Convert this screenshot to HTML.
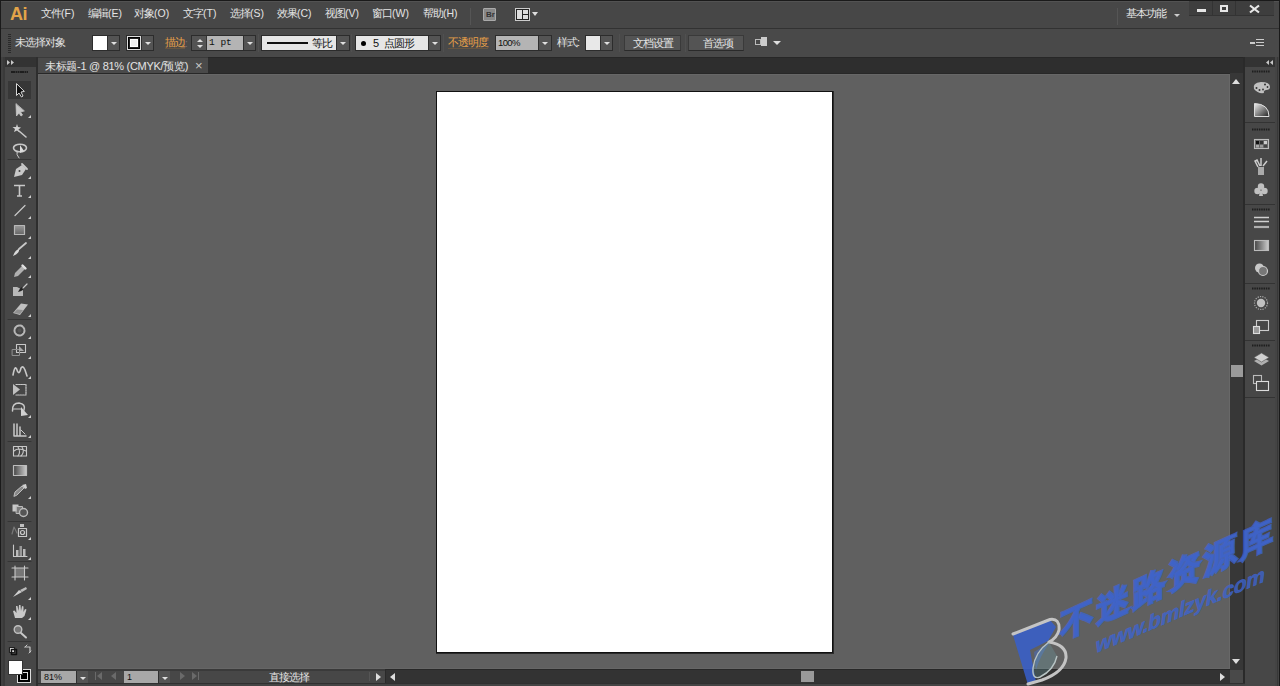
<!DOCTYPE html>
<html><head><meta charset="utf-8">
<style>
*{margin:0;padding:0;box-sizing:border-box}
html,body{width:1280px;height:686px;overflow:hidden;background:#1a1a1a;font-family:"Liberation Sans",sans-serif;}
.a{position:absolute}
.menu{top:7px;font-size:11px;color:#e4e4e4;white-space:nowrap;line-height:13px;letter-spacing:-1px}
.l{font-size:10.5px;letter-spacing:0}
.t{font-size:11px;color:#e4e4e4;white-space:nowrap;line-height:13px;letter-spacing:-1px}
.dd{background:#545454;border-left:1px solid #2f2f2f}
.dd:after{content:"";position:absolute;left:3px;top:6px;border-left:3px solid transparent;border-right:3px solid transparent;border-top:3px solid #e0e0e0}
.grp{border:1px solid #2c2c2c}
.sep{width:1px;background:#383838;border-right:1px solid #505050}
svg{position:absolute;overflow:visible}
</style></head><body>
<!-- window frame -->
<div class="a" style="left:1px;top:1px;width:1278px;height:685px;background:#454545"></div>
<!-- menubar -->
<div class="a" style="left:1px;top:1px;width:1278px;height:27px;background:#474747;border-top:1px solid #525252"></div>
<div class="a" style="left:1px;top:28px;width:1278px;height:1px;background:#323232"></div>
<!-- control bar -->
<div class="a" style="left:1px;top:29px;width:1278px;height:28px;background:#494949"></div>
<!-- left toolbar -->
<div class="a" style="left:1px;top:57px;width:3px;height:629px;background:#404040"></div>
<div class="a" style="left:3px;top:57px;width:2px;height:629px;background:#3a3a3a"></div>
<div class="a" style="left:5px;top:57px;width:31px;height:629px;background:#474747"></div>
<div class="a" style="left:5px;top:57px;width:31px;height:10px;background:#333"></div>
<div class="a" style="left:36px;top:57px;width:2px;height:629px;background:#2e2e2e"></div>
<!-- tab bar -->
<div class="a" style="left:38px;top:57px;width:1207px;height:17px;background:#2e2e2e;border-top:1px solid #272727"></div>
<div class="a" style="left:38px;top:57px;width:170px;height:16px;background:#4a4a4a;border-top:1px solid #3a3a3a"></div>
<div class="a" style="left:38px;top:73px;width:1192px;height:1px;background:#282828"></div>
<!-- canvas -->
<div class="a" style="left:38px;top:74px;width:1192px;height:595px;background:#606060;border-top:1px solid #676767;border-left:1px solid #656565;border-right:1px solid #686868;border-bottom:1px solid #666"></div>
<!-- vscroll -->
<div class="a" style="left:1230px;top:73px;width:13px;height:597px;background:#373737"></div>
<div class="a" style="left:1243px;top:57px;width:2px;height:629px;background:#2a2a2a"></div>
<!-- right dock -->
<div class="a" style="left:1245px;top:57px;width:30px;height:629px;background:#474747"></div>
<div class="a" style="left:1245px;top:57px;width:30px;height:10px;background:#333"></div>
<div class="a" style="left:1275px;top:57px;width:4px;height:629px;background:#444"></div>
<div class="a" style="left:1277px;top:57px;width:1px;height:629px;background:#383838"></div>
<div class="a" style="left:1279px;top:0px;width:1px;height:686px;background:#1a1a1a"></div>
<!-- status bar -->
<div class="a" style="left:38px;top:669px;width:1192px;height:17px;background:#474747;border-top:2px solid #3a3a3a"></div>
<div class="a" style="left:385px;top:669px;width:845px;height:14px;background:#333;border-top:1px solid #282828;border-left:1px solid #2a2a2a"></div>
<div class="a" style="left:1230px;top:670px;width:13px;height:13px;background:#494949"></div>
<div class="a" style="left:38px;top:683px;width:1207px;height:1px;background:#303030"></div>
<div class="a" style="left:38px;top:684px;width:1207px;height:2px;background:#444"></div>
<div class="a" style="left:369px;top:672px;width:1px;height:9px;background:#3a3a3a;border-right:1px solid #555"></div>

<!-- artboard -->
<div class="a" style="left:436px;top:91px;width:398px;height:563px;background:#2b2b2b"></div>
<div class="a" style="left:436px;top:91px;width:397px;height:562px;background:#fff;border:1px solid #111"></div>

<!-- menu -->
<div class="a" style="left:10px;top:5px;font-size:18px;font-weight:bold;color:#e3a449;line-height:18px;letter-spacing:-0.5px">Ai</div>
<div class="a menu" style="left:41px">文件<span class="l">(F)</span></div>
<div class="a menu" style="left:88px">编辑<span class="l">(E)</span></div>
<div class="a menu" style="left:134px">对象<span class="l">(O)</span></div>
<div class="a menu" style="left:183px">文字<span class="l">(T)</span></div>
<div class="a menu" style="left:230px">选择<span class="l">(S)</span></div>
<div class="a menu" style="left:277px">效果<span class="l">(C)</span></div>
<div class="a menu" style="left:325px">视图<span class="l">(V)</span></div>
<div class="a menu" style="left:372px">窗口<span class="l">(W)</span></div>
<div class="a menu" style="left:423px">帮助<span class="l">(H)</span></div>
<div class="a" style="left:470px;top:8px;width:1px;height:17px;background:#333;border-right:1px solid #555"></div>

<!-- Br icon -->
<div class="a" style="left:483px;top:8px;width:13px;height:13px;background:#888;border:1px solid #aaa;border-radius:1px"></div>
<div class="a" style="left:486px;top:10px;font-size:8px;color:#333;font-weight:bold;line-height:9px">Br</div>
<!-- layout icon -->
<div class="a" style="left:515px;top:8px;width:15px;height:13px;border:1px solid #ccc;background:#222"></div>
<div class="a" style="left:517px;top:10px;width:5px;height:9px;background:#ddd"></div>
<div class="a" style="left:523px;top:10px;width:5px;height:4px;background:#ddd"></div>
<div class="a" style="left:523px;top:15px;width:5px;height:4px;background:#ddd"></div>
<div class="a" style="left:532px;top:12px;border-left:3px solid transparent;border-right:3px solid transparent;border-top:4px solid #ddd"></div>

<!-- workspace -->
<div class="a" style="left:1117px;top:8px;width:1px;height:17px;background:#333;border-right:1px solid #555"></div>
<div class="a menu" style="left:1126px;top:7px">基本功能</div>
<div class="a" style="left:1174px;top:14px;border-left:3px solid transparent;border-right:3px solid transparent;border-top:3px solid #ccc"></div>
<!-- window buttons -->
<div class="a" style="left:1189px;top:1px;width:85px;height:15px;background:#3e3e3e;border-bottom:1px solid #333"></div>
<div class="a" style="left:1212px;top:1px;width:1px;height:15px;background:#333"></div>
<div class="a" style="left:1235px;top:1px;width:1px;height:15px;background:#333"></div>
<div class="a" style="left:1197px;top:9px;width:9px;height:3px;background:#e6e6e6"></div>
<div class="a" style="left:1220px;top:5px;width:8px;height:7px;border:2px solid #e6e6e6"></div>
<svg style="left:1249px;top:5px" width="11" height="8"><path d="M1 0.5 L10 7.5 M10 0.5 L1 7.5" stroke="#e8e8e8" stroke-width="2.2"/></svg>

<!-- control bar contents -->
<div class="a" style="left:8px;top:34px;width:3px;height:19px;background:repeating-linear-gradient(#2a2a2a 0 1px,transparent 1px 2px)"></div>
<div class="a t" style="left:15px;top:36px">未选择对象</div>

<div class="a grp" style="left:92px;top:35px;width:28px;height:16px;background:#545454"></div>
<div class="a" style="left:93px;top:36px;width:14px;height:14px;background:#fff"></div>
<div class="a dd" style="left:107px;top:36px;width:12px;height:14px"></div>

<div class="a grp" style="left:126px;top:35px;width:28px;height:16px;background:#545454"></div>
<div class="a" style="left:127px;top:36px;width:14px;height:14px;background:#000;border:1px solid #ddd"></div>
<div class="a" style="left:130px;top:39px;width:8px;height:8px;background:#eee;border:1px solid #fff;outline:1px solid #222"></div>
<div class="a dd" style="left:141px;top:36px;width:12px;height:14px"></div>

<div class="a t" style="left:165px;top:36px;color:#e8a048;border-bottom:1px solid rgba(160,110,50,0.35);line-height:12px">描边</div>
<div class="a" style="left:185px;top:38px;font-size:10px;color:#777">:</div>
<div class="a grp" style="left:191px;top:35px;width:65px;height:16px;background:#545454"></div>
<div class="a" style="left:197px;top:39px;border-left:3px solid transparent;border-right:3px solid transparent;border-bottom:3px solid #ddd"></div>
<div class="a" style="left:197px;top:45px;border-left:3px solid transparent;border-right:3px solid transparent;border-top:3px solid #ddd"></div>
<div class="a" style="left:206px;top:36px;width:37px;height:14px;background:#b4b4b4;border-left:1px solid #333"></div>
<div class="a" style="left:209px;top:37px;font-family:'Liberation Mono',monospace;font-size:9.5px;color:#111;line-height:12px;letter-spacing:0px">1 pt</div>
<div class="a dd" style="left:243px;top:36px;width:12px;height:14px"></div>
<div class="a sep" style="left:258px;top:34px;height:18px"></div>

<div class="a grp" style="left:261px;top:35px;width:89px;height:16px;background:#545454"></div>
<div class="a" style="left:262px;top:36px;width:74px;height:14px;background:#e6e6e6"></div>
<div class="a" style="left:267px;top:42px;width:41px;height:2px;background:#111"></div>
<div class="a t" style="left:312px;top:37px;color:#111">等比</div>
<div class="a dd" style="left:336px;top:36px;width:13px;height:14px"></div>
<div class="a sep" style="left:351px;top:34px;height:18px"></div>

<div class="a grp" style="left:355px;top:35px;width:86px;height:16px;background:#545454"></div>
<div class="a" style="left:356px;top:36px;width:72px;height:14px;background:#e6e6e6"></div>
<div class="a" style="left:361px;top:41px;width:5px;height:5px;border-radius:50%;background:#000"></div>
<div class="a" style="left:373px;top:37px;font-size:11px;color:#111;line-height:12px">5</div>
<div class="a t" style="left:384px;top:37px;color:#111">点圆形</div>
<div class="a dd" style="left:428px;top:36px;width:12px;height:14px"></div>
<div class="a sep" style="left:443px;top:34px;height:18px"></div>

<div class="a t" style="left:448px;top:36px;color:#e8a048;border-bottom:1px solid rgba(160,110,50,0.35);line-height:12px">不透明度</div>
<div class="a grp" style="left:495px;top:35px;width:57px;height:16px;background:#545454"></div>
<div class="a" style="left:496px;top:36px;width:42px;height:14px;background:#b4b4b4"></div>
<div class="a" style="left:498px;top:37px;font-size:9.5px;color:#111;line-height:12px;letter-spacing:-0.6px">100%</div>
<div class="a dd" style="left:538px;top:36px;width:13px;height:14px"></div>
<div class="a t" style="left:557px;top:36px">样式:</div>
<div class="a grp" style="left:585px;top:35px;width:28px;height:16px;background:#545454"></div>
<div class="a" style="left:586px;top:36px;width:14px;height:14px;background:#e8e8e8"></div>
<div class="a dd" style="left:600px;top:36px;width:12px;height:14px"></div>
<div class="a sep" style="left:619px;top:34px;height:18px"></div>

<div class="a" style="left:624px;top:35px;width:57px;height:16px;background:#545454;border:1px solid #3a3a3a;border-bottom-color:#2a2a2a"></div>
<div class="a t" style="left:633px;top:37px">文档设置</div>
<div class="a sep" style="left:685px;top:34px;height:18px"></div>
<div class="a" style="left:688px;top:35px;width:56px;height:16px;background:#545454;border:1px solid #3a3a3a;border-bottom-color:#2a2a2a"></div>
<div class="a t" style="left:703px;top:37px">首选项</div>
<div class="a" style="left:755px;top:39px;width:6px;height:6px;border:1px solid #bbb"></div>
<div class="a" style="left:761px;top:37px;width:6px;height:9px;background:#ccc"></div>
<div class="a" style="left:773px;top:41px;border-left:4px solid transparent;border-right:4px solid transparent;border-top:4px solid #ddd"></div>

<!-- right menu icon -->
<div class="a" style="left:1250px;top:42px;border-top:2px solid transparent;border-bottom:2px solid transparent;border-right:0;border-left:0"></div>
<div class="a" style="left:1250px;top:42px;width:5px;height:2px;background:#ccc"></div>
<div class="a" style="left:1256px;top:39px;width:8px;height:1px;background:#ccc"></div>
<div class="a" style="left:1256px;top:42px;width:8px;height:1px;background:#ccc"></div>
<div class="a" style="left:1256px;top:45px;width:8px;height:1px;background:#ccc"></div>

<!-- tab text -->
<div class="a t" style="left:45px;top:60px;font-size:11px;letter-spacing:-0.3px">未标题-1 @ 81% (CMYK/预览)</div>
<div class="a" style="left:195px;top:59px;font-size:13px;color:#c8c8c8;line-height:13px">×</div>

<!-- toolbar header -->
<svg class="a" style="left:7px;top:60px" width="8" height="5"><path d="M0 0 L3 2.5 L0 5 Z M4 0 L7 2.5 L4 5 Z" fill="#c8c8c8"/></svg>
<div class="a" style="left:11px;top:71px;width:17px;height:2px;background:repeating-linear-gradient(90deg,#1e1e1e 0 1.5px,#333 1.5px 2.3px)"></div>
<!-- right dock header -->
<svg class="a" style="left:1266px;top:60px" width="8" height="5"><path d="M3 0 L0 2.5 L3 5 Z M7 0 L4 2.5 L7 5 Z" fill="#c8c8c8"/></svg>

<!-- status bar -->
<div class="a" style="left:41px;top:671px;width:35px;height:12px;background:#a8a8a8"></div>
<div class="a" style="left:44px;top:671px;font-size:9px;color:#111;line-height:12px">81%</div>
<div class="a dd" style="left:76px;top:671px;width:12px;height:12px"></div>
<div class="a" style="left:124px;top:671px;width:34px;height:12px;background:#a8a8a8"></div>
<div class="a" style="left:127px;top:671px;font-size:9px;color:#111;line-height:12px">1</div>
<div class="a dd" style="left:158px;top:671px;width:12px;height:12px"></div>
<div class="a t" style="left:269px;top:671px;">直接选择</div>
<div class="a" style="left:376px;top:673px;border-top:4px solid transparent;border-bottom:4px solid transparent;border-left:5px solid #ddd"></div>
<div class="a" style="left:390px;top:673px;border-top:4px solid transparent;border-bottom:4px solid transparent;border-right:5px solid #ddd"></div>
<div class="a" style="left:1220px;top:673px;border-top:4px solid transparent;border-bottom:4px solid transparent;border-left:5px solid #ddd"></div>
<div class="a" style="left:801px;top:671px;width:13px;height:11px;background:#9a9a9a"></div>
<!-- nav arrows -->
<div class="a" style="left:95px;top:672px;width:1px;height:8px;background:#6a6a6a"></div>
<div class="a" style="left:97px;top:672px;border-top:4px solid transparent;border-bottom:4px solid transparent;border-right:5px solid #6a6a6a"></div>
<div class="a" style="left:111px;top:672px;border-top:4px solid transparent;border-bottom:4px solid transparent;border-right:5px solid #6a6a6a"></div>
<div class="a" style="left:180px;top:672px;border-top:4px solid transparent;border-bottom:4px solid transparent;border-left:5px solid #6a6a6a"></div>
<div class="a" style="left:192px;top:672px;border-top:4px solid transparent;border-bottom:4px solid transparent;border-left:5px solid #6a6a6a"></div>
<div class="a" style="left:198px;top:672px;width:1px;height:8px;background:#6a6a6a"></div>
<!-- vscroll arrows & thumb -->
<div class="a" style="left:1232px;top:79px;border-left:4.5px solid transparent;border-right:4.5px solid transparent;border-bottom:5px solid #ddd"></div>
<div class="a" style="left:1232px;top:659px;border-left:4.5px solid transparent;border-right:4.5px solid transparent;border-top:5px solid #ddd"></div>
<div class="a" style="left:1231px;top:365px;width:12px;height:12px;background:#9a9a9a"></div>

<!-- fill/stroke -->
<div class="a" style="left:17px;top:669px;width:14px;height:14px;background:#000;border:1px solid #ddd"></div>
<div class="a" style="left:20px;top:672px;width:8px;height:8px;border:1px solid #ddd;background:#000"></div>
<div class="a" style="left:8px;top:660px;width:15px;height:15px;background:#fff;border:1px solid #333"></div>
<svg class="a" style="left:0;top:0" width="1280" height="686" viewBox="0 0 1280 686">
<defs>
<linearGradient id="gr1" x1="0" y1="0" x2="1" y2="0"><stop offset="0" stop-color="#444"/><stop offset="1" stop-color="#ccc"/></linearGradient>
<linearGradient id="gr2" x1="0" y1="0" x2="1" y2="1"><stop offset="0" stop-color="#eee"/><stop offset="1" stop-color="#222"/></linearGradient>
<linearGradient id="gr3" x1="0" y1="0" x2="0" y2="1"><stop offset="0" stop-color="#999"/><stop offset="1" stop-color="#666"/></linearGradient>
</defs>
<g fill="none" stroke="#c8c8c8" stroke-width="1.2" stroke-linejoin="round" stroke-linecap="round">
<g><path d="M8 159.5 L31 159.5" stroke="#353535" stroke-width="1"/><path d="M8 319.5 L31 319.5" stroke="#353535" stroke-width="1"/><path d="M8 441.5 L31 441.5" stroke="#353535" stroke-width="1"/><path d="M8 521.5 L31 521.5" stroke="#353535" stroke-width="1"/><path d="M8 561.5 L31 561.5" stroke="#353535" stroke-width="1"/><path d="M8 641.5 L31 641.5" stroke="#353535" stroke-width="1"/></g>
<!-- selected highlight -->
<rect x="8" y="81" width="23" height="18" fill="#373737" stroke="none"/>
<!-- 1 selection -->
<path d="M16.5 84 L16.5 95.5 L19 93 L21.5 97 L23 96 L21 92 L24 91.5 Z" fill="#111" stroke="#d8d8d8" stroke-width="1"/>
<!-- 2 direct selection -->
<path d="M16 104 L16.5 116 L19 113 L21 116 L22.5 115 L20.5 112 L24 111 Z" fill="#c8c8c8" stroke="#c8c8c8" stroke-width="0.8"/>
<!-- 3 magic wand -->
<path d="M17 124 L18 127 L21 127.5 L18.5 129.5 L19.5 132.5 L17 130.5 L14 132 L15 129 L12.5 127 L16 127 Z" fill="#d0d0d0" stroke="none"/>
<path d="M19 131 L26 137" stroke-width="1.6"/>
<!-- 4 lasso -->
<ellipse cx="20" cy="148" rx="6.5" ry="3.8" stroke-width="1.6"/>
<path d="M20 145 L20 153 L24 151 Z" fill="#ddd" stroke="none"/>
<path d="M17 151 Q16 155 19 158" stroke-width="1"/>
<!-- 5 pen -->
<path d="M14 177 L16 169 L22 165 L26 169 L22 175 Z" fill="#c8c8c8" stroke="none"/>
<path d="M22 164 L27 169" stroke-width="1.8"/>
<circle cx="19.5" cy="171" r="1" fill="#444" stroke="none"/>
<!-- 6 type -->
<path d="M14 185.5 L25 185.5 M19.5 185.5 L19.5 196 M17 196 L22 196" stroke-width="1.6" stroke-linecap="butt"/>
<!-- 7 line -->
<path d="M15 215.5 L25 205.5" stroke-width="1.2"/>
<!-- 8 rect -->
<rect x="14.5" y="225.5" width="10" height="9" fill="url(#gr3)" stroke="#b8b8b8"/>
<!-- 9 brush -->
<path d="M19 249 L26 243" stroke-width="1.8"/>
<path d="M13 256 Q15 250 19 249 Q20 253 13 256 Z" fill="#d8d8d8" stroke="none"/>
<!-- 10 pencil -->
<path d="M14 277 L15 273 L23 265 L26 268 L18 276 Z" fill="#b0b0b0" stroke="none"/>
<path d="M22.5 265.5 L25.5 268.5" stroke="#e0e0e0" stroke-width="2.4"/>
<!-- 11 blob -->
<path d="M13 287 L13 296 L23 296 L23 290 L17 287 Z" fill="#b8b8b8" stroke="none"/>
<path d="M18 292 Q21 286 24 287 Q24 291 18 292 Z" fill="#222" stroke="none"/>
<path d="M23 288 L27 284" stroke-width="1.2"/>
<!-- 12 eraser -->
<path d="M13 313 L21 303.5 L28 304.5 L20 315 Z" fill="#c0c0c0" stroke="none"/>
<path d="M14 313 L17 309.5 L23 310 L20 314 Z" fill="#909090" stroke="none"/>
<!-- 13 rotate -->
<circle cx="19.5" cy="330.5" r="5" stroke-width="2" stroke-dasharray="2.2 1.2" stroke="#b8b8b8"/><circle cx="19.5" cy="330.5" r="2" fill="#555" stroke="none"/>
<!-- 14 scale -->
<rect x="16.5" y="344.5" width="9" height="8" stroke-width="1.1"/>
<rect x="12.5" y="349.5" width="7" height="6" stroke="#909090" stroke-width="1"/>
<path d="M19 346 L24 351 L19 351 Z" fill="#aaa" stroke="none"/>
<!-- 15 width -->
<path d="M13 375 Q15 364 17 370 Q19 376 21 368 Q23 365 25 370 L27 376" stroke-width="1.6"/>
<!-- 16 free transform -->
<path d="M13 384 L13 395 L20 389.5 Z" fill="#c0c0c0" stroke="none"/>
<path d="M16 384.5 L26 384.5 L26 395 L16 395" stroke-width="1.2" stroke-dasharray="1.5 1"/>
<!-- 17 shape builder -->
<path d="M12.5 411 Q12 403 19 403 Q26 404 24 410" stroke-width="1.5"/>
<path d="M13 409 L21 409" stroke-width="1.2"/>
<path d="M21 407 L21 416 L28 415 Z" fill="#d0d0d0" stroke="none"/>
<!-- 18 perspective grid -->
<path d="M14 424 L14 436 L26 436 M17 424 L17 436 M20 427 L20 436" stroke-width="1.5"/>
<path d="M21 430 L25 434" stroke-width="1"/>
<!-- 19 mesh -->
<rect x="13.5" y="446.5" width="13" height="9.5" stroke-width="1.1"/>
<path d="M14 451 Q18 447 26 451 M18 447 Q21 452 18 456 M22 447 Q25 452 21 456" stroke-width="1.1"/>
<!-- 20 gradient -->
<rect x="13.5" y="465.5" width="13" height="10" fill="url(#gr1)" stroke="#bdbdbd"/>
<!-- 21 eyedropper -->
<path d="M14 496 L15 492 L22 486 L24 488 L17 495 Z" fill="#888" stroke="#c8c8c8" stroke-width="0.9"/>
<path d="M22 485 L26 484 L27 488 L25 489 Z" fill="#d0d0d0" stroke="none"/>
<!-- 22 blend -->
<rect x="12.5" y="504.5" width="6" height="7" fill="#c8c8c8" stroke="none"/>
<rect x="16.5" y="506.5" width="6" height="7" fill="#7a7a7a" stroke="#bbb" stroke-width="1"/>
<circle cx="23.5" cy="512.5" r="4" fill="#555" stroke="#bbb" stroke-width="1.4"/>
<!-- 23 symbol sprayer -->
<rect x="18.5" y="528.5" width="8" height="8" stroke-width="1.2"/>
<circle cx="22.5" cy="532.5" r="2" stroke-width="1.2"/>
<path d="M12 534 L14 527 L17 533" stroke="#777" stroke-width="1.2"/>
<rect x="20" y="524" width="4" height="3" fill="#c0c0c0" stroke="none"/>
<!-- 24 column graph -->
<path d="M13.5 545 L13.5 556.5 L27 556.5" stroke-width="1.1"/>
<rect x="16" y="550" width="2.5" height="6" fill="#bbb" stroke="none"/>
<rect x="19.5" y="546" width="2.5" height="10" fill="#999" stroke="none"/>
<rect x="23" y="549" width="2.5" height="7" fill="#bbb" stroke="none"/>
<!-- 25 artboard -->
<rect x="15" y="568" width="9.5" height="9" fill="#777" stroke="none"/>
<path d="M15 566 L15 580 M24.5 566 L24.5 580 M12 568 L28 568 M12 577 L28 577" stroke-width="1.1"/>
<!-- 26 slice -->
<path d="M13 597 L19 590 L22 592 Z" fill="#d0d0d0" stroke="none"/>
<path d="M20 590 L26 587 L27 589 L22 592 Z" fill="#bbb" stroke="none"/>
<!-- 27 hand -->
<path d="M15 618 L13 611 L14.5 610.5 L16.5 613 L16 606 L17.5 606 L18.5 611 L19 605 L20.5 605 L21 611 L22 606 L23.5 606.5 L23.5 612 L25 609 L26.5 609.5 L24.5 616 L22 618 Z" fill="#c8c8c8" stroke="none"/>
<!-- 28 zoom -->
<circle cx="18" cy="629.5" r="3.8" fill="#777" stroke="#c0c0c0" stroke-width="1.4"/>
<path d="M21 633 L26 637.5" stroke-width="2"/>
<!-- flyout dots -->
<g fill="#d0d0d0" stroke="none">
<path d="M31.0 115.0 L31.0 118.0 L28.0 118.0 Z"/><path d="M31.0 176.0 L31.0 179.0 L28.0 179.0 Z"/><path d="M31.0 195.0 L31.0 198.0 L28.0 198.0 Z"/>
<path d="M31.0 216.0 L31.0 219.0 L28.0 219.0 Z"/><path d="M31.0 236.0 L31.0 239.0 L28.0 239.0 Z"/><path d="M31.0 256.0 L31.0 259.0 L28.0 259.0 Z"/>
<path d="M31.0 275.0 L31.0 278.0 L28.0 278.0 Z"/><path d="M31.0 314.0 L31.0 317.0 L28.0 317.0 Z"/><path d="M31.0 336.0 L31.0 339.0 L28.0 339.0 Z"/>
<path d="M31.0 356.0 L31.0 359.0 L28.0 359.0 Z"/><path d="M31.0 376.0 L31.0 379.0 L28.0 379.0 Z"/><path d="M31.0 415.0 L31.0 418.0 L28.0 418.0 Z"/>
<path d="M31.0 435.0 L31.0 438.0 L28.0 438.0 Z"/><path d="M31.0 496.0 L31.0 499.0 L28.0 499.0 Z"/><path d="M31.0 537.0 L31.0 540.0 L28.0 540.0 Z"/>
<path d="M31.0 557.0 L31.0 560.0 L28.0 560.0 Z"/><path d="M31.0 597.0 L31.0 600.0 L28.0 600.0 Z"/><path d="M31.0 617.0 L31.0 620.0 L28.0 620.0 Z"/>
</g>
<!-- small default fill/stroke & swap -->
<rect x="9.5" y="647.5" width="5" height="5" fill="#eee" stroke="#222"/>
<rect x="11.5" y="649.5" width="5" height="5" fill="none" stroke="#111" stroke-width="1.5"/>
<path d="M25 647 L30 647 L30 652" stroke-width="1.2"/>
<path d="M29 653 L31 651 M25 647 L27 645" stroke-width="1"/>
</g>
<!-- right dock -->
<g fill="none" stroke="#c8c8c8" stroke-width="1.1">
<!-- grips -->
<g stroke="#1e1e1e" stroke-width="2" stroke-dasharray="1.5 0.8">
<path d="M1252 71.5 L1270 71.5 M1252 129.5 L1270 129.5 M1252 209.5 L1270 209.5 M1252 288.5 L1270 288.5 M1252 345.5 L1270 345.5"/>
</g>
<!-- group separators -->
<g stroke="#333" stroke-width="1">
<path d="M1245 122.5 L1275 122.5 M1245 204.5 L1275 204.5 M1245 283.5 L1275 283.5 M1245 340.5 L1275 340.5 M1245 397.5 L1275 397.5"/>
</g>
<!-- palette -->
<path d="M1254 89 Q1252 83 1261 82 Q1270 82 1270 87 Q1270 90 1266 90 Q1263 91 1264 93 Q1258 94 1254 89 Z" fill="#c0c0c0" stroke="none"/>
<g fill="#333" stroke="none"><circle cx="1256.5" cy="88" r="1"/><circle cx="1259.5" cy="90" r="1"/><circle cx="1263" cy="89.5" r="0.9"/><circle cx="1265" cy="84.5" r="1"/><circle cx="1267.5" cy="87" r="0.9"/></g>
<!-- gradient quarter -->
<path d="M1254.5 103.5 Q1269 104 1269 116.5 L1254.5 116.5 Z" fill="url(#gr2)" stroke="#ddd" stroke-width="1"/>
<!-- swatches -->
<rect x="1254.5" y="139.5" width="14" height="9" fill="#666" stroke="#bbb"/>
<rect x="1256" y="141" width="3" height="3" fill="#111" stroke="none"/><rect x="1260" y="141" width="3" height="3" fill="#333" stroke="none"/><rect x="1264" y="141" width="3" height="3" fill="#ccc" stroke="none"/>
<rect x="1256" y="145" width="3" height="2.5" fill="#aaa" stroke="none"/><rect x="1260" y="145" width="3" height="2.5" fill="#999" stroke="none"/><rect x="1264" y="145" width="3" height="2.5" fill="#444" stroke="none"/>
<!-- brushes -->
<rect x="1258" y="167" width="6" height="8" fill="#aaa" stroke="none"/>
<path d="M1258 167 L1255 161 L1257 160 L1260 166 M1261 166 L1261 158 M1263 166 L1267 161" stroke="#ccc" stroke-width="1.5"/>
<!-- club -->
<g fill="#c0c0c0" stroke="none"><circle cx="1261" cy="186.5" r="3.2"/><circle cx="1257.5" cy="191" r="3.2"/><circle cx="1264.5" cy="191" r="3.2"/><path d="M1260 191 L1259 196 L1263 196 L1262 191 Z"/></g>
<!-- stroke lines -->
<path d="M1254 217.5 L1269 217.5 M1254 221.5 L1269 221.5" stroke="#d0d0d0" stroke-width="1.3"/>
<path d="M1254 227 L1269 227" stroke="#b0b0b0" stroke-width="2.2"/>
<!-- gradient panel -->
<rect x="1254.5" y="240.5" width="14" height="10" fill="url(#gr1)" stroke="#bbb"/>
<!-- transparency -->
<circle cx="1259.5" cy="268" r="4.5" fill="#c8c8c8" stroke="none"/>
<circle cx="1263" cy="271" r="4.5" fill="#777" stroke="#c8c8c8" stroke-width="1.2"/>
<!-- appearance sun -->
<circle cx="1261" cy="303" r="4.2" fill="#c0c0c0" stroke="none"/>
<circle cx="1261" cy="303" r="6.5" stroke="#aaa" stroke-width="1.2" stroke-dasharray="1.2 1.2"/>
<!-- graphic styles -->
<rect x="1256.5" y="320.5" width="12" height="10" stroke="#ccc"/>
<rect x="1253.5" y="326.5" width="6" height="7" fill="#999" stroke="#ddd"/>
<!-- layers -->
<path d="M1254 361 L1261.5 357 L1269 361 L1261.5 365.5 Z" fill="#b0b0b0" stroke="none"/>
<path d="M1254 357.5 L1261.5 353 L1269 357.5 L1261.5 362 Z" fill="#d0d0d0" stroke="#555" stroke-width="0.6"/>
<!-- artboards -->
<rect x="1253.5" y="375.5" width="8" height="8" stroke="#bbb"/>
<rect x="1256.5" y="381.5" width="12" height="9" fill="#474747" stroke="#ddd"/>
</g>
</svg>

<!-- watermark -->
<div class="a" id="wm1" style="left:1061px;top:606px;width:260px;height:44px;transform:skewY(-24.4deg);transform-origin:0 50%;font-size:33px;font-weight:bold;color:rgba(62,100,205,0.8);line-height:44px;white-space:nowrap;letter-spacing:2.8px;-webkit-text-stroke:2.5px rgba(62,100,205,0.8)">不迷路资源库</div>
<div class="a" id="wm2" style="left:1096px;top:633px;width:220px;height:26px;transform:skewY(-23deg) skewX(-8deg);transform-origin:0 50%;font-size:21px;font-weight:bold;color:rgba(62,100,205,0.8);line-height:26px;white-space:nowrap;letter-spacing:-0.4px;-webkit-text-stroke:0.6px rgba(62,100,205,0.8)">www.bmlzyk.com</div>
<svg class="a" style="left:1000px;top:600px" width="80" height="86" viewBox="0 0 80 86">
<path d="M13 35 L50 20 L56 27 L48 41 L30 50 L36 82 L28 85 Z" fill="rgba(55,95,205,0.85)"/>
<path d="M34 52 Q46 44 50 42 Q40 56 36 70 Z" fill="rgba(70,110,200,0.5)"/>
<path d="M13 34 L50 19.5 Q60 18 59 30 Q57 38 49 42 Q67 45 66 58 Q64 72 42 80 L28 84" fill="none" stroke="#c4c4c4" stroke-width="3" stroke-linejoin="round" stroke-linecap="round"/>
<path d="M49 42 Q35 52 33 68 Q32 80 40 77 Q54 70 57 56" fill="rgba(110,170,180,0.25)" stroke="#b8c4c4" stroke-width="1.4"/>
</svg>
</body></html>
